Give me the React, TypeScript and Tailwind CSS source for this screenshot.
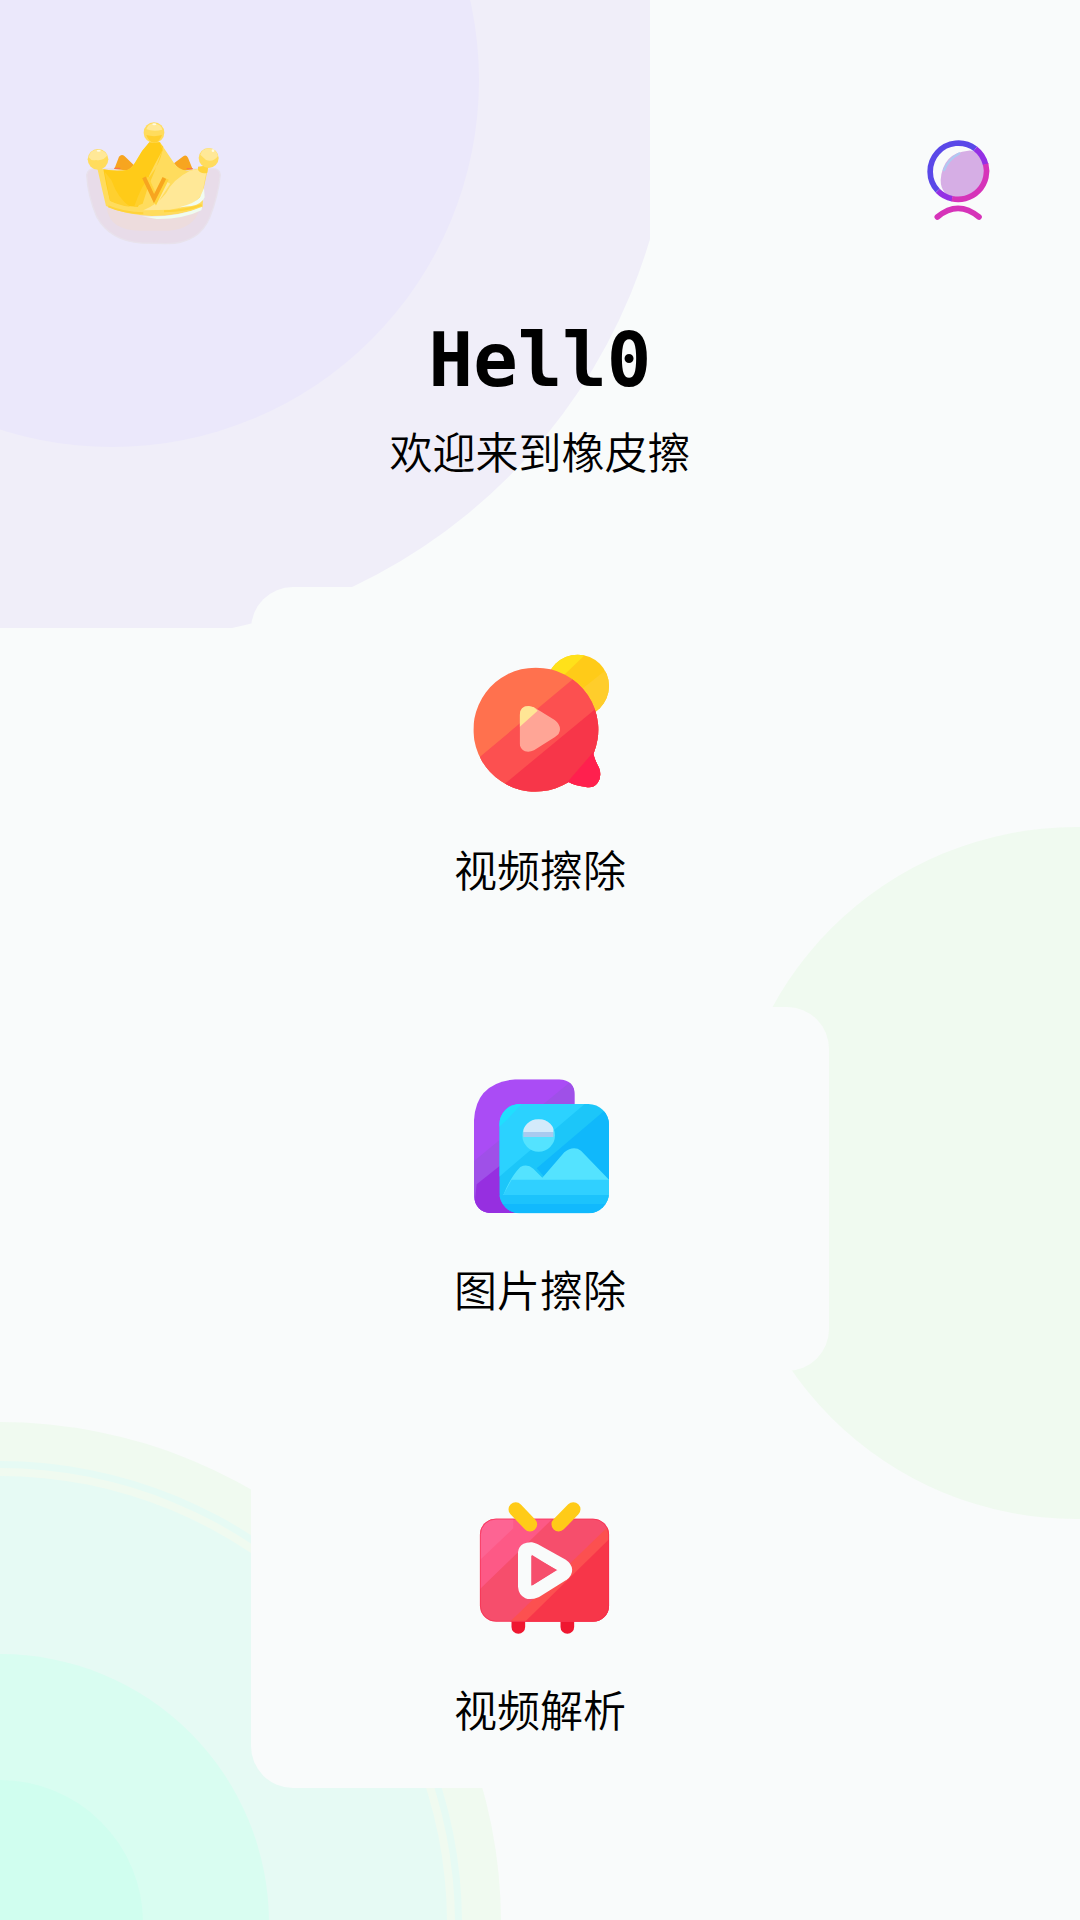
import React from 'react';

const CrownIcon = () => (
  <svg viewBox="0 0 570 480" className="w-[190px] h-[160px]" aria-hidden="true">
    <path d="M80 225 Q84 203 110 206 L455 206 Q478 203 481 225 Q474 290 450 350 Q418 430 320 431 L245 429 Q150 423 110 350 Q84 290 80 225Z" fill="#e8dce9" stroke="#e8e2ec" strokeWidth="4" />
    <path d="M140 325 Q150 392 240 392 L325 392 Q402 388 420 325Z" fill="#eddcdd" />
    <path d="M163 207 L177 170 Q185 160 194 169 L222 196 L208 212Z" fill="#f7a51f" />
    <path d="M342 190 L370 169 Q378 163 384 173 L398 208 L362 214Z" fill="#f7a51f" />
    <path d="M163 205 h18 M380 206 h18" stroke="#fb7548" strokeWidth="4" />
    <path d="M112 205 Q165 216 205 209 Q218 202 230 180 Q246 150 268 127 L300 127 L344 192 Q355 208 380 212 Q410 210 446 196 L430 270 L428 322 Q360 348 275 348 Q190 343 138 318 Q124 260 112 205Z" fill="#ffdc5d" />
    <path d="M130 208 Q170 216 205 209 Q218 202 230 180 Q246 150 268 127 L300 127 L308 150 Q285 190 268 226 Q252 275 234 320 Q190 318 150 302 Q138 255 130 208Z" fill="#ffcb18" />
    <path d="M134 215 L154 240 Q174 296 210 320 Q176 316 150 302Z M300 130 L308 150 Q300 190 272 226 Q246 252 222 321 L248 311 Q262 260 284 214 L310 140Z" fill="#ffd02f" />
    <path d="M390 212 Q420 208 443 196 L428 276 Q412 318 330 329 L250 331 Q292 314 318 280 Q338 238 390 212Z" fill="#ffe897" />
    <path d="M432 264 L434 292 Q426 312 395 318 L358 322 Q405 310 420 292Z" fill="#f1fcf1" />
    <path d="M245 349 Q350 354 427 320 L424 331 Q370 358 290 357Z" fill="#effcf0" />
    <path d="M145 319 Q190 338 250 340 M312 334 Q380 332 425 315" fill="none" stroke="#ffd33a" strokeWidth="6" />
    <path d="M267 252 L291 300 L325 248" fill="none" stroke="#ffe897" strokeWidth="13" />
    <path d="M258 234 L288 298 L319 236" fill="none" stroke="#ffd43b" strokeWidth="16" />
    <path d="M252 232 L282 296 L313 234" fill="none" stroke="#f7a51f" strokeWidth="12" />
    <circle cx="282" cy="98" r="31" fill="#ffdc5d" />
    <path d="M259 105 Q282 112 306 105 Q298 128 282 128 Q266 126 259 105Z" fill="#ffcf2f" />
    <path d="M259 88 Q263 72 281 70 Q303 72 307 89 Q282 96 259 88Z" fill="#ffe897" />
    <ellipse cx="283" cy="73" rx="6" ry="3" fill="#fffbe0" />
    <circle cx="114" cy="178" r="31" fill="#ffdc5d" />
    <path d="M86 172 Q89 150 113 149 Q135 151 142 166 Q130 184 108 180 Q94 184 86 172Z" fill="#ffe897" />
    <ellipse cx="116" cy="152" rx="6" ry="3" fill="#fffbe0" />
    <path d="M414 200 L445 196 L442 218 Q425 224 414 210Z" fill="#ffd33a" />
    <circle cx="446" cy="174" r="30" fill="#ffdc5d" />
    <path d="M421 164 Q425 148 446 145 Q470 147 474 168 Q460 188 438 180Z" fill="#ffe897" />
    <circle cx="459" cy="152" r="4" fill="#fffbe0" />
  </svg>
);

const ProfileIcon = () => (
  <svg viewBox="0 0 360 360" className="w-[120px] h-[120px]" fill="none" aria-hidden="true">
    <path d="M225 95 Q253 118 252 155 Q250 232 174 232 Q122 230 122 180 Q128 98 205 92 Q216 91 225 95Z" fill="#d6aee5" />
    <path d="M131 153 Q143 119 180 99" stroke="#aecaf1" strokeWidth="7" />
    <path d="M113 212 A85 85 0 0 1 226 86" stroke="#5a48e8" strokeWidth="17" />
    <path d="M226 86 A85 85 0 0 1 257 134" stroke="#9430e4" strokeWidth="17" />
    <path d="M113 212 A85 85 0 0 0 157 236" stroke="#9430e4" strokeWidth="17" />
    <path d="M257 132 A85 85 0 0 1 156 236" stroke="#d633b9" strokeWidth="17" />
    <path d="M112 291 Q174 239 237 291" stroke="#d633b9" strokeWidth="17" strokeLinecap="round" />
  </svg>
);

const VideoEraseIcon = () => (
  <svg viewBox="45 30 450 450" className="w-[150px] h-[150px]" aria-hidden="true">
    <defs>
      <clipPath id="bubble">
        <path d="M256 83 A186 186 0 0 1 430 342 Q435 362 447 383 Q457 408 443 428 Q430 446 405 440 Q375 437 356 426 A186 186 0 1 1 256 83Z" />
      </clipPath>
      <clipPath id="sun">
        <circle cx="383" cy="138" r="94" />
      </clipPath>
      <clipPath id="play">
        <path d="M209 225 Q210 198 236 198 L252 202 L314 240 Q330 252 330 268 Q330 282 315 291 L252 331 Q238 338 225 334 Q210 328 209 310Z" />
      </clipPath>
    </defs>
    <g clipPath="url(#sun)">
      <rect x="280" y="40" width="200" height="200" fill="#ffcb18" />
      <path d="M280 40 L410 40 L335 112 L280 140Z" fill="#ffe11a" />
      <path d="M480 80 L380 160 L420 240 L480 240Z" fill="#ffcd2b" />
    </g>
    <g clipPath="url(#bubble)">
      <rect x="60" y="70" width="410" height="400" fill="#ff714e" />
      <path d="M380 108 L90 350 L90 480 L480 480 L480 100Z" fill="#fc5050" />
      <path d="M460 187 L160 435 L160 480 L480 480 L480 180Z" fill="#f73649" />
      <path d="M440 325 L340 440 L470 460 L470 320Z" fill="#ff204e" />
    </g>
    <g clipPath="url(#play)">
      <rect x="200" y="190" width="140" height="150" fill="#ffa596" />
      <path d="M205 264 L263 212 L240 190 L200 190Z" fill="#ffe695" />
    </g>
  </svg>
);

const ImageEraseIcon = () => (
  <svg viewBox="45 30 450 450" className="w-[150px] h-[150px]" aria-hidden="true">
    <defs>
      <clipPath id="backCard">
        <path d="M195 58 L328 58 Q374 62 374 105 L374 250 L250 459 L118 459 Q76 453 72 408 L72 180 Q78 68 195 58Z" />
      </clipPath>
      <clipPath id="frontCard">
        <rect x="148" y="132" width="329" height="328" rx="62" />
      </clipPath>
      <clipPath id="imageSun">
        <circle cx="266" cy="226" r="49" />
      </clipPath>
    </defs>
    <g clipPath="url(#backCard)">
      <rect x="70" y="50" width="310" height="415" fill="#aa4cf5" />
      <path d="M380 50 L70 305 L70 465 L380 465Z" fill="#9f50e8" />
      <path d="M80 373 L190 285 L250 465 L70 465Z" fill="#962fe0" />
    </g>
    <g clipPath="url(#frontCard)">
      <rect x="148" y="132" width="329" height="328" fill="#1cc6f9" />
      <path d="M148 132 L404 132 L148 350Z" fill="#2bd2ff" />
      <path d="M148 132 L215 132 L170 180 L148 200Z" fill="#20dfff" />
      <path d="M477 140 L260 325 L300 370 L477 365Z" fill="#10b8fb" />
      <path d="M160 405 Q182 350 211 321 Q232 310 250 326 L277 353 L343 277 Q370 255 393 272 L477 359 L477 405Z" fill="#54e3ff" />
      <path d="M185 359 L477 359 L477 406 L159 406Z" fill="#30d0ff" />
      <rect x="148" y="405" width="329" height="28" fill="#1cc3fc" />
      <rect x="148" y="432" width="329" height="28" fill="#11b9fd" />
      <g clipPath="url(#imageSun)">
        <rect x="215" y="175" width="102" height="102" fill="#54e3ff" />
        <rect x="220" y="178" width="90" height="39" fill="#d3eafb" />
        <rect x="220" y="216" width="90" height="15" fill="#a9caef" />
      </g>
    </g>
  </svg>
);

const VideoParseIcon = () => (
  <svg viewBox="45 30 450 450" className="w-[150px] h-[150px]" aria-hidden="true">
    <defs>
      <clipPath id="tvBody">
        <rect x="90" y="116" width="387" height="309" rx="48" />
      </clipPath>
    </defs>
    <path d="M205 415 V441 M352 415 V441" stroke="#ef1730" strokeWidth="41" strokeLinecap="round" />
    <g clipPath="url(#tvBody)">
      <rect x="90" y="116" width="387" height="309" fill="#f64e6c" />
      <path d="M90 116 L308 116 L90 327Z" fill="#fd5986" />
      <path d="M90 116 L190 116 L190 145 L90 240Z" fill="#fd6493" />
      <path d="M477 137 L180 425 L477 425Z" fill="#fc5050" />
      <path d="M477 178 L225 425 L477 425Z" fill="#f73649" />
    </g>
    <rect x="91" y="117" width="385" height="307" rx="47" fill="none" stroke="#f8284b" strokeWidth="2" />
    <path d="M197 88 L240 133 M370 88 L326 133" stroke="#ffcb18" strokeWidth="43" strokeLinecap="round" />
    <path d="M224 218 Q225 206 245 207 L254 210 L335 255 Q357 270 337 284 L258 333 Q226 346 224 319Z" fill="none" stroke="#f9fbfb" strokeWidth="40" strokeLinejoin="round" />
    <path d="M245 224 L319 270 L245 317Z" fill="#f64e6c" />
  </svg>
);

const features = [
  { id: 'video-erase', label: '视频擦除', Icon: VideoEraseIcon },
  { id: 'image-erase', label: '图片擦除', Icon: ImageEraseIcon },
  { id: 'video-parse', label: '视频解析', Icon: VideoParseIcon },
];

const Backdrop = () => (
  <div className="absolute inset-0 -z-10 overflow-hidden" aria-hidden="true">
    <div className="absolute left-0 top-0 w-[650px] h-[628px] overflow-hidden">
      <div className="absolute -left-[449px] -top-[481px] w-[1122px] h-[1122px] rounded-full bg-[#f0eef9]" />
      <div className="absolute -left-[255px] -top-[287px] w-[734px] h-[734px] rounded-full bg-[#ebe8fb]" />
    </div>
    <div className="absolute -right-[342px] top-[827px] w-[692px] h-[692px] rounded-full bg-[#f0faf0]" />
    <div className="absolute -left-[501px] -bottom-[504px] w-[1002px] h-[1002px] rounded-full bg-[#f0faf0] flex items-center justify-center">
      <div className="w-[924px] h-[924px] rounded-full bg-[#e6faf4] flex items-center justify-center">
        <div className="w-[910px] h-[910px] rounded-full bg-[#f0faf0] flex items-center justify-center">
          <div className="w-[894px] h-[894px] rounded-full bg-[#e6faf4] flex items-center justify-center">
            <div className="w-[538px] h-[538px] rounded-full bg-[#d9fdf1] flex items-center justify-center">
              <div className="w-[286px] h-[286px] rounded-full bg-[#d0feef]" />
            </div>
          </div>
        </div>
      </div>
    </div>
  </div>
);

export default function App() {
  return (
    <div className="relative isolate min-h-screen bg-[#f9fbfb] text-black font-['Noto_Sans_CJK_SC',sans-serif]">
      <Backdrop />

      <header className="flex items-center justify-between px-[60px] pt-[100px]">
        <button type="button" aria-label="会员">
          <CrownIcon />
        </button>
        <button type="button" aria-label="我的">
          <ProfileIcon />
        </button>
      </header>

      <main className="flex flex-col items-center pb-32">
        <h1 className="mt-[60px] text-[74px] leading-[80px] font-bold font-['DejaVu_Sans_Mono',monospace]">
          Hell0
        </h1>
        <p className="mt-[18px] text-[43px] leading-[64px] font-[350]">欢迎来到橡皮擦</p>

        <div className="mt-[105px] flex w-[578px] max-w-full flex-col gap-14">
          {features.map(({ id, label, Icon }) => (
            <button
              key={id}
              type="button"
              className="flex flex-col items-center rounded-[42px] bg-[#f9fbfb] pt-[63px] pb-[51px] last:pb-12"
            >
              <Icon />
              <span className="mt-9 text-[43px] leading-[64px] font-[350]">{label}</span>
            </button>
          ))}
        </div>
      </main>
    </div>
  );
}
